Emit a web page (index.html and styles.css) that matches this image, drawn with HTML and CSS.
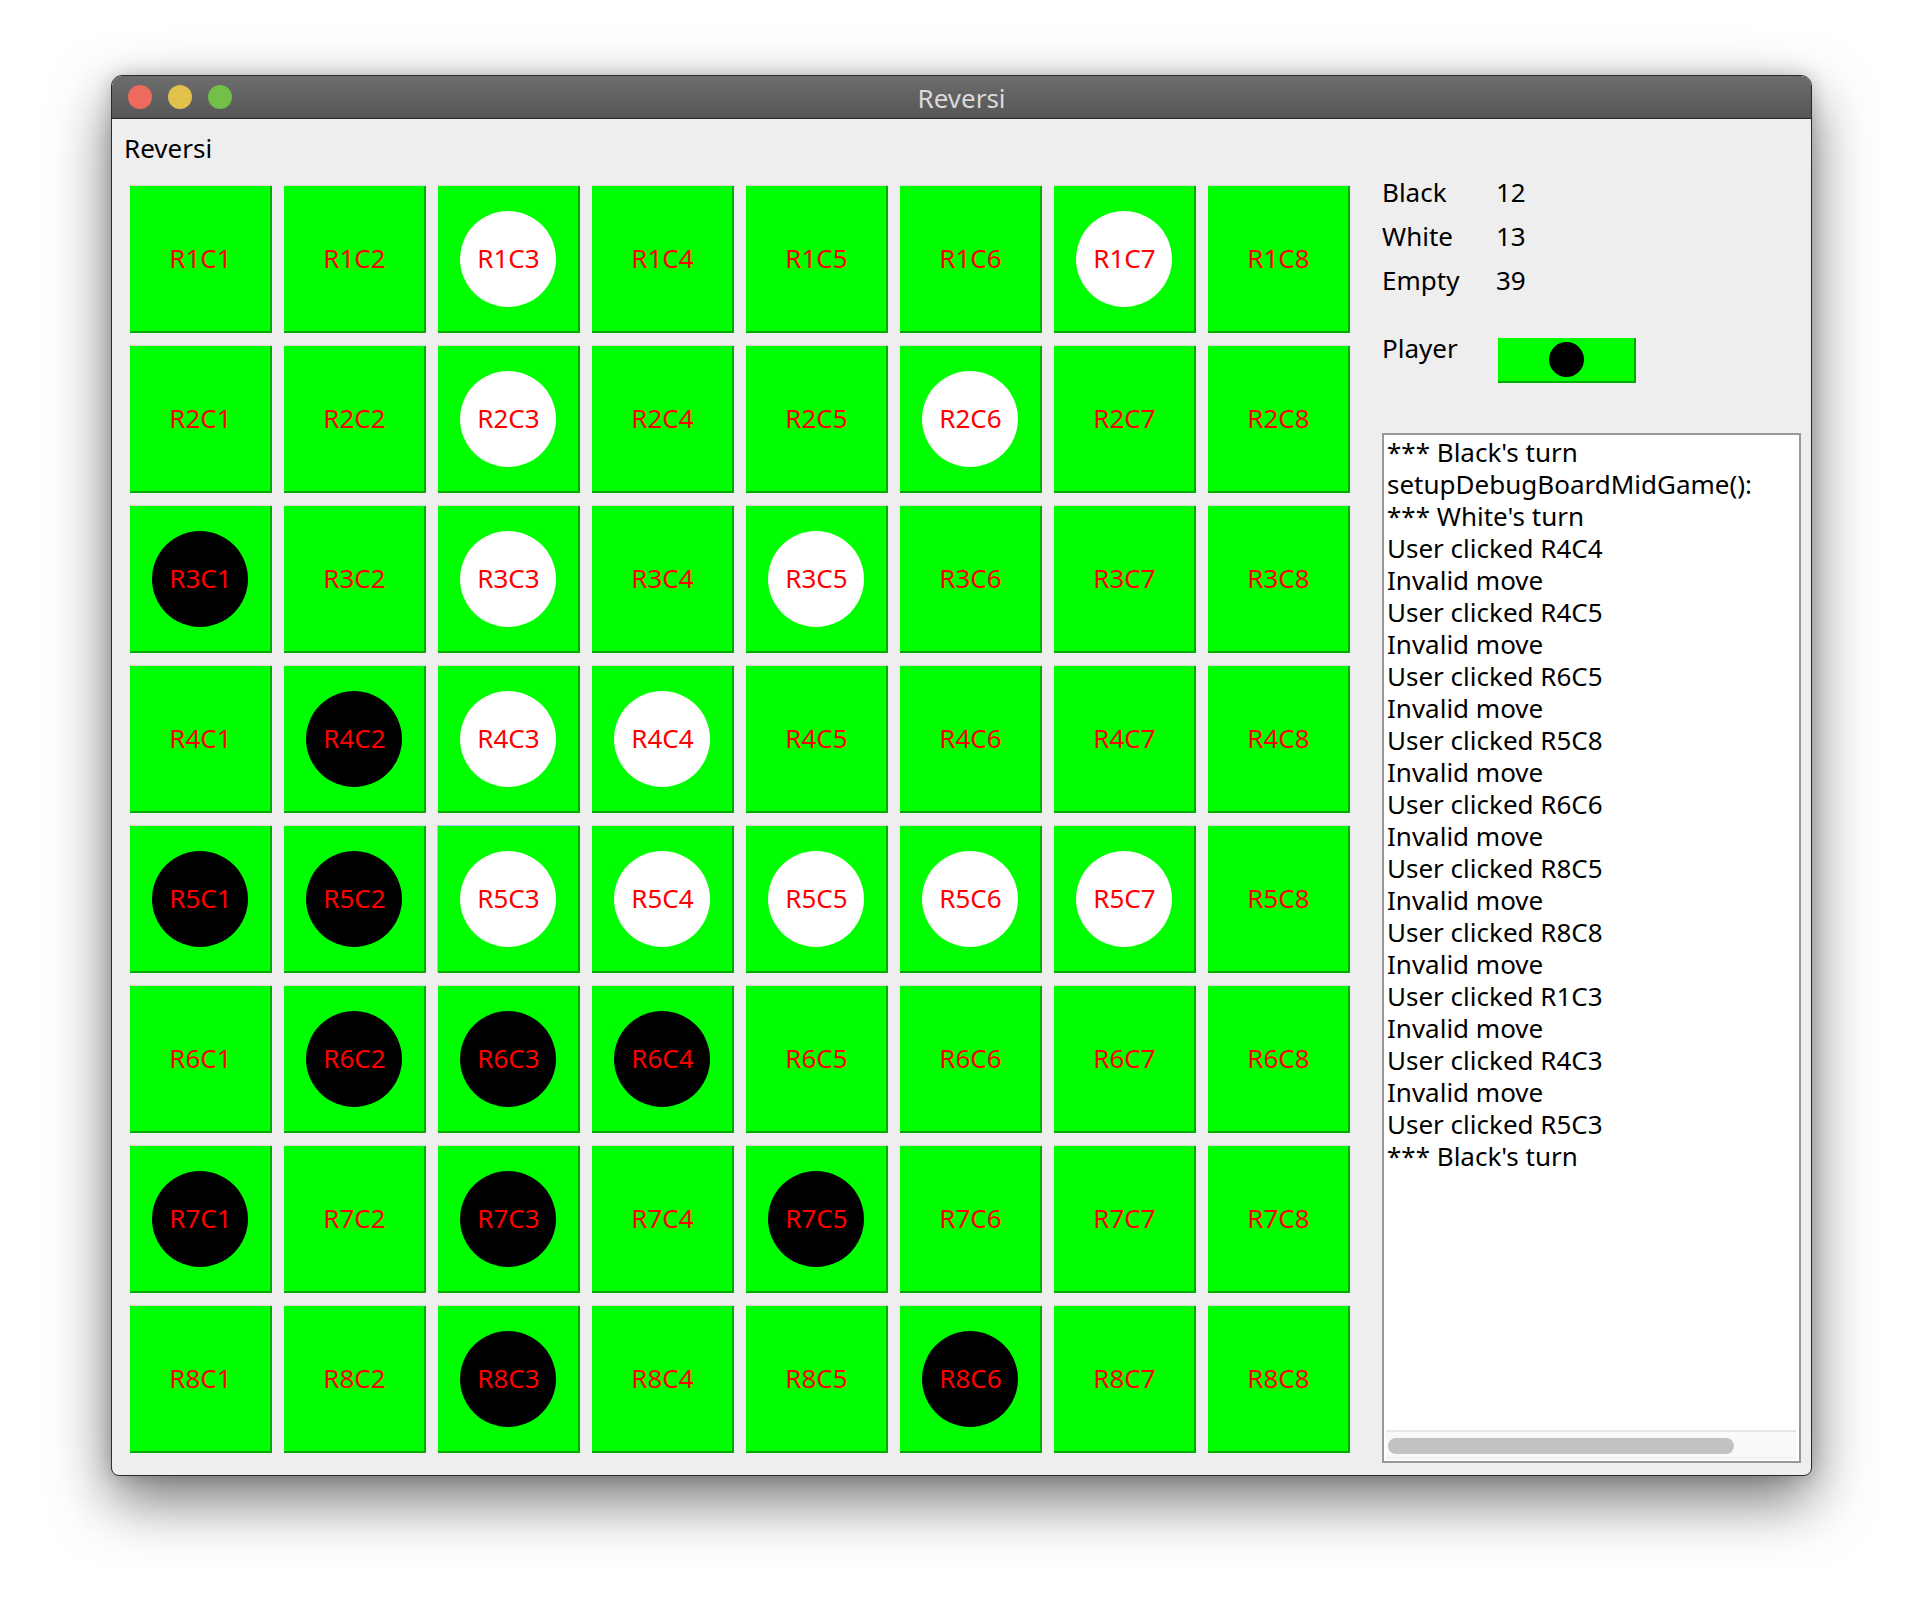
FILE: index.html
```html
<!DOCTYPE html>
<html>
<head>
<meta charset="utf-8">
<title>Reversi</title>
<link rel="stylesheet" href="styles.css">
</head>
<body>
<div class="page">
  <div class="window">
    <div class="titlebar">
      <div class="lights">
        <span class="light red"></span>
        <span class="light yellow"></span>
        <span class="light green"></span>
      </div>
      <div class="title">Reversi</div>
    </div>
    <div class="content">
      <div class="left">
        <div class="app-label">Reversi</div>
        <div class="board">
          <div class="cell"><span class="lbl">R1C1</span></div>
          <div class="cell"><span class="lbl">R1C2</span></div>
          <div class="cell"><span class="disc white"></span><span class="lbl">R1C3</span></div>
          <div class="cell"><span class="lbl">R1C4</span></div>
          <div class="cell"><span class="lbl">R1C5</span></div>
          <div class="cell"><span class="lbl">R1C6</span></div>
          <div class="cell"><span class="disc white"></span><span class="lbl">R1C7</span></div>
          <div class="cell"><span class="lbl">R1C8</span></div>

          <div class="cell"><span class="lbl">R2C1</span></div>
          <div class="cell"><span class="lbl">R2C2</span></div>
          <div class="cell"><span class="disc white"></span><span class="lbl">R2C3</span></div>
          <div class="cell"><span class="lbl">R2C4</span></div>
          <div class="cell"><span class="lbl">R2C5</span></div>
          <div class="cell"><span class="disc white"></span><span class="lbl">R2C6</span></div>
          <div class="cell"><span class="lbl">R2C7</span></div>
          <div class="cell"><span class="lbl">R2C8</span></div>

          <div class="cell"><span class="disc black"></span><span class="lbl">R3C1</span></div>
          <div class="cell"><span class="lbl">R3C2</span></div>
          <div class="cell"><span class="disc white"></span><span class="lbl">R3C3</span></div>
          <div class="cell"><span class="lbl">R3C4</span></div>
          <div class="cell"><span class="disc white"></span><span class="lbl">R3C5</span></div>
          <div class="cell"><span class="lbl">R3C6</span></div>
          <div class="cell"><span class="lbl">R3C7</span></div>
          <div class="cell"><span class="lbl">R3C8</span></div>

          <div class="cell"><span class="lbl">R4C1</span></div>
          <div class="cell"><span class="disc black"></span><span class="lbl">R4C2</span></div>
          <div class="cell"><span class="disc white"></span><span class="lbl">R4C3</span></div>
          <div class="cell"><span class="disc white"></span><span class="lbl">R4C4</span></div>
          <div class="cell"><span class="lbl">R4C5</span></div>
          <div class="cell"><span class="lbl">R4C6</span></div>
          <div class="cell"><span class="lbl">R4C7</span></div>
          <div class="cell"><span class="lbl">R4C8</span></div>

          <div class="cell"><span class="disc black"></span><span class="lbl">R5C1</span></div>
          <div class="cell"><span class="disc black"></span><span class="lbl">R5C2</span></div>
          <div class="cell focused"><span class="disc white"></span><span class="lbl">R5C3</span></div>
          <div class="cell"><span class="disc white"></span><span class="lbl">R5C4</span></div>
          <div class="cell"><span class="disc white"></span><span class="lbl">R5C5</span></div>
          <div class="cell"><span class="disc white"></span><span class="lbl">R5C6</span></div>
          <div class="cell"><span class="disc white"></span><span class="lbl">R5C7</span></div>
          <div class="cell"><span class="lbl">R5C8</span></div>

          <div class="cell"><span class="lbl">R6C1</span></div>
          <div class="cell"><span class="disc black"></span><span class="lbl">R6C2</span></div>
          <div class="cell"><span class="disc black"></span><span class="lbl">R6C3</span></div>
          <div class="cell"><span class="disc black"></span><span class="lbl">R6C4</span></div>
          <div class="cell"><span class="lbl">R6C5</span></div>
          <div class="cell"><span class="lbl">R6C6</span></div>
          <div class="cell"><span class="lbl">R6C7</span></div>
          <div class="cell"><span class="lbl">R6C8</span></div>

          <div class="cell"><span class="disc black"></span><span class="lbl">R7C1</span></div>
          <div class="cell"><span class="lbl">R7C2</span></div>
          <div class="cell"><span class="disc black"></span><span class="lbl">R7C3</span></div>
          <div class="cell"><span class="lbl">R7C4</span></div>
          <div class="cell"><span class="disc black"></span><span class="lbl">R7C5</span></div>
          <div class="cell"><span class="lbl">R7C6</span></div>
          <div class="cell"><span class="lbl">R7C7</span></div>
          <div class="cell"><span class="lbl">R7C8</span></div>

          <div class="cell"><span class="lbl">R8C1</span></div>
          <div class="cell"><span class="lbl">R8C2</span></div>
          <div class="cell"><span class="disc black"></span><span class="lbl">R8C3</span></div>
          <div class="cell"><span class="lbl">R8C4</span></div>
          <div class="cell"><span class="lbl">R8C5</span></div>
          <div class="cell"><span class="disc black"></span><span class="lbl">R8C6</span></div>
          <div class="cell"><span class="lbl">R8C7</span></div>
          <div class="cell"><span class="lbl">R8C8</span></div>
        </div>
      </div>
      <div class="right">
        <div class="stats">
          <div class="stat-name">Black</div><div class="stat-val">12</div>
          <div class="stat-name">White</div><div class="stat-val">13</div>
          <div class="stat-name">Empty</div><div class="stat-val">39</div>
        </div>
        <div class="player-row">
          <div class="player-label">Player</div>
          <div class="player-box"><span class="player-disc"></span></div>
        </div>
        <div class="log">
          <div class="log-text">*** Black's turn
setupDebugBoardMidGame():
*** White's turn
User clicked R4C4
Invalid move
User clicked R4C5
Invalid move
User clicked R6C5
Invalid move
User clicked R5C8
Invalid move
User clicked R6C6
Invalid move
User clicked R8C5
Invalid move
User clicked R8C8
Invalid move
User clicked R1C3
Invalid move
User clicked R4C3
Invalid move
User clicked R5C3
*** Black's turn</div>
          <div class="hscroll"><div class="hthumb"></div></div>
        </div>
      </div>
    </div>
  </div>
</div>
</body>
</html>
```

FILE: styles.css
```css
html, body {
  margin: 0;
  padding: 0;
  background: #ffffff;
}
body {
  width: 1924px;
  height: 1624px;
  overflow: hidden;
  font-family: "Noto Sans", "DejaVu Sans", sans-serif;
}
.page {
  padding: 75px 0 0 111px;
}
.window {
  box-sizing: border-box;
  width: 1701px;
  height: 1401px;
  border: 1px solid #2b2b2b;
  border-radius: 11px 11px 8px 8px;
  background: #eeeeee;
  overflow: hidden;
  box-shadow: 0 24px 60px rgba(0, 0, 0, 0.55), 0 0 18px rgba(0, 0, 0, 0.18);
}
.titlebar {
  position: relative;
  height: 42px;
  border-bottom: 1px solid #262626;
  background: linear-gradient(#6d6d6d, #565656);
  display: flex;
  align-items: center;
  justify-content: center;
}
.lights {
  position: absolute;
  left: 16px;
  top: 9px;
  display: flex;
  gap: 16px;
}
.light {
  width: 24px;
  height: 24px;
  border-radius: 50%;
}
.light.red { background: #ef6a5e; }
.light.yellow { background: #e1c04b; }
.light.green { background: #73bf47; }
.title {
  color: #dadada;
  font-size: 26px;
  line-height: 30px;
  margin-top: 2px;
}
.content {
  display: flex;
  padding: 13px 0 0 12px;
}
.app-label {
  font-size: 26px;
  line-height: 32px;
  color: #000;
}
.board {
  margin: 22px 0 0 6px;
  display: grid;
  grid-template-columns: repeat(8, 142px);
  grid-template-rows: repeat(8, 147px);
  column-gap: 12px;
  row-gap: 13px;
}
.cell {
  position: relative;
  box-sizing: border-box;
  background: #00ff00;
  border-right: 2px solid #00ac00;
  border-bottom: 2px solid #00ac00;
  box-shadow: 0 -1px 1px rgba(0, 0, 0, 0.08);
  display: flex;
  align-items: center;
  justify-content: center;
}
.cell.focused {
  box-shadow: -1px -1px 0 rgba(120, 170, 235, 0.55);
}
.disc {
  position: absolute;
  left: 22px;
  top: 25px;
  width: 96px;
  height: 96px;
  border-radius: 50%;
}
.disc.white { background: #ffffff; }
.disc.black { background: #000000; }
.lbl {
  position: relative;
  color: #ff0000;
  font-size: 26px;
  line-height: 32px;
  margin: -2px 0 0 1px;
}
.right {
  margin: 38px 0 0 32px;
  width: 419px;
  display: flex;
  flex-direction: column;
}
.stats {
  display: grid;
  grid-template-columns: 114px auto;
  grid-auto-rows: 44px;
  font-size: 26px;
  line-height: 44px;
  color: #000;
}
.player-row {
  margin-top: 36px;
  display: flex;
  align-items: flex-start;
  height: 45px;
}
.player-label {
  width: 116px;
  font-size: 26px;
  line-height: 20px;
  color: #000;
}
.player-box {
  box-sizing: border-box;
  width: 138px;
  height: 45px;
  background: #00ff00;
  border-right: 2px solid #00ac00;
  border-bottom: 2px solid #00ac00;
  display: flex;
  align-items: center;
  justify-content: center;
}
.player-disc {
  width: 35px;
  height: 35px;
  border-radius: 50%;
  background: #000;
}
.log {
  margin-top: 50px;
  box-sizing: border-box;
  width: 419px;
  height: 1030px;
  border: 2px solid #999999;
  background: #ffffff;
  display: flex;
  flex-direction: column;
}
.log-text {
  flex: 1;
  padding: 1px 0 0 3px;
  white-space: pre;
  font-size: 26px;
  line-height: 32px;
  color: #000;
  overflow: hidden;
}
.hscroll {
  box-sizing: border-box;
  height: 29px;
  margin: 0 0 2px 2px;
  width: 410px;
  background: #f9f9f9;
  border-top: 2px solid #e6e6e6;
  border-bottom: 2px solid #f0f0f0;
  padding: 6px 0 0 2px;
}
.hthumb {
  width: 346px;
  height: 16px;
  border-radius: 8px;
  background: #c2c2c2;
}
```
